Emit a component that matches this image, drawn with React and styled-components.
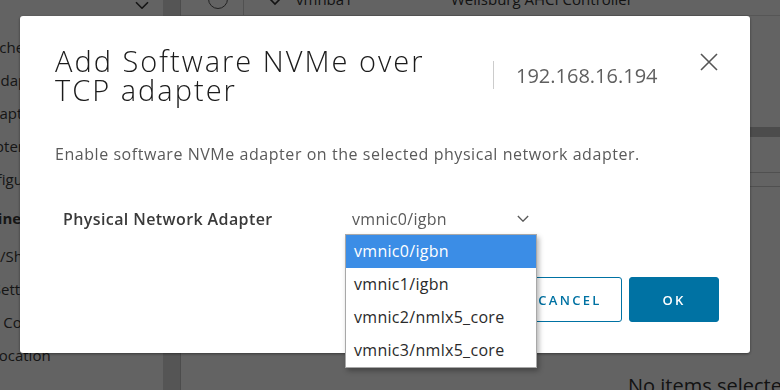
import React from 'react'
import styled, { createGlobalStyle } from 'styled-components'

const GlobalStyle = createGlobalStyle`
  html, body {
    margin: 0;
    padding: 0;
    width: 780px;
    height: 390px;
    overflow: hidden;
    background: #ffffff;
    font-family: "Open Sans", "Noto Sans", sans-serif;
  }
  * { box-sizing: border-box; }
`

const Page = styled.div`
  display: flex;
  width: 780px;
  height: 390px;
  overflow: hidden;
  background: #ffffff;
  color: #333;
`

const Sidebar = styled.aside`
  width: 163px;
  flex: 0 0 163px;
  overflow: hidden;
  display: flex;
  flex-direction: column;
`

const SideTop = styled.div`
  height: 22px;
  display: flex;
  justify-content: flex-end;
  align-items: center;
  padding-right: 14px;
  margin-top: -6px;
  color: #333;
`

const NavList = styled.ul`
  list-style: none;
  margin: 15px 0 0 -98px;
  padding: 0;
  white-space: nowrap;
`

const NavItem = styled.li`
  height: 33px;
  line-height: 33px;
  font-size: 15px;
  padding-left: ${p => (p.$head ? '0' : '20px')};
  font-weight: ${p => (p.$head ? 700 : 400)};
  margin-top: ${p => (p.$gap ? '6px' : '0')};
  margin-bottom: ${p => (p.$head ? '5px' : '0')};
  color: #3a3a3a;
`

const Splitter = styled.div`
  width: 18px;
  flex: 0 0 18px;
  background: #dcdcdc;
  border-right: 1px solid #c4c4c4;
`

const Main = styled.main`
  flex: 1;
  display: flex;
  flex-direction: column;
  min-width: 0;
`

const TableRow = styled.div`
  display: flex;
  align-items: center;
  height: 34px;
  margin-top: -18px;
  border-bottom: 1px solid #dedede;
  font-size: 15px;
  color: #333;
`

const Cell = styled.div`
  display: flex;
  align-items: center;
  gap: 10px;
  height: 100%;
  width: ${p => p.$w || 'auto'};
  padding-left: ${p => p.$pl || '12px'};
  border-right: ${p => (p.$line ? '1px solid #d0d0d0' : 'none')};
`

const Radio = styled.span`
  width: 20px;
  height: 20px;
  border-radius: 50%;
  border: 1.5px solid #555;
  background: #fff;
`

const Band = styled.div`
  margin-top: 111px;
  height: 10px;
  background: #c4c4c4;
`

const Rule = styled.div`
  margin-top: ${p => p.$mt};
  height: 1px;
  background: #cfcfcf;
`

const Empty = styled.div`
  margin-top: auto;
  margin-bottom: -9px;
  padding-left: 447px;
  font-size: 20px;
  color: #333;
  white-space: nowrap;
`

const Overlay = styled.div`
  position: fixed;
  inset: 0;
  background: rgba(0, 0, 0, 0.61);
  display: flex;
  align-items: flex-start;
  padding: 16px 0 0 20px;
`

const Modal = styled.section`
  width: 730px;
  height: 337px;
  background: #fff;
  border-radius: 3px;
  box-shadow: 0 1px 3px rgba(0, 0, 0, 0.45);
  padding: 30px 31px 31px 35px;
  display: flex;
  flex-direction: column;
`

const Header = styled.header`
  display: flex;
  align-items: center;
`

const Title = styled.h2`
  margin: 0;
  width: 415px;
  flex: 0 0 415px;
  font-size: 29px;
  line-height: 29px;
  font-weight: 300;
  color: #1b1b1b;
  letter-spacing: 2px;
`

const Divider = styled.span`
  width: 1px;
  height: 28px;
  background: #cccccc;
  margin: 0 22px 0 23px;
`

const Host = styled.span`
  font-size: 20px;
  color: #5f5f5f;
  font-weight: 400;
  flex: 1;
`

const Close = styled.button`
  align-self: flex-start;
  margin-top: 6px;
  border: 0;
  background: none;
  padding: 0;
  width: 20px;
  height: 20px;
  color: #555;
  display: flex;
`

const Desc = styled.p`
  margin: 40px 0 0;
  font-size: 16px;
  line-height: 20px;
  letter-spacing: 0.55px;
  color: #5a5a5a;
`

const FormRow = styled.div`
  margin-top: 39px;
  display: flex;
  align-items: center;
  height: 31px;
`

const Label = styled.label`
  width: 290px;
  padding-left: 8px;
  font-size: 16px;
  letter-spacing: 0.4px;
  font-weight: 600;
  color: #3a3a3a;
`

const SelectWrap = styled.div`
  position: relative;
  width: 192px;
  height: 31px;
`

const SelectBox = styled.div`
  height: 31px;
  display: flex;
  align-items: center;
  justify-content: space-between;
  padding: 0 8px 0 7px;
  font-size: 16px;
  letter-spacing: 0.3px;
  color: #5a5a5a;
`

const List = styled.ul`
  position: absolute;
  top: 100%;
  left: 0;
  width: 192px;
  margin: 0;
  padding: 0;
  list-style: none;
  background: #fff;
  border: 1px solid #a8a8a8;
  box-shadow: 2px 3px 5px rgba(0, 0, 0, 0.3);
  z-index: 2;
`

const Option = styled.li`
  height: 33px;
  line-height: 33px;
  padding-left: 8px;
  font-size: 16px;
  letter-spacing: 0.3px;
  background: ${p => (p.$active ? '#3b8de6' : '#fff')};
  color: ${p => (p.$active ? '#fff' : '#2a2a2a')};
`

const Footer = styled.footer`
  margin-top: auto;
  display: flex;
  justify-content: flex-end;
  gap: 7px;
`

const Button = styled.button`
  height: 45px;
  width: ${p => p.$w};
  border-radius: 3px;
  border: 1px solid #0072a3;
  background: ${p => (p.$primary ? '#0072a3' : '#fff')};
  color: ${p => (p.$primary ? '#fff' : '#0072a3')};
  font-family: "Open Sans", sans-serif;
  font-size: 13px;
  font-weight: 600;
  letter-spacing: 2.3px;
  text-transform: uppercase;
`

const Chevron = ({ size = 14 }) => (
  <svg width={size} height={size * 0.6} viewBox="0 0 14 8" fill="none">
    <path d="M1 1l6 6 6-6" stroke="currentColor" strokeWidth="1.6" />
  </svg>
)

const HbaIcon = () => (
  <svg width="22" height="16" viewBox="0 0 22 16" fill="none">
    <path d="M2 4l9 9 9-9M6 4h10" stroke="#333" strokeWidth="1.6" />
  </svg>
)

const nav = [
  { t: 'Virtual switches' },
  { t: 'VMkernel adapters' },
  { t: 'Physical adapters' },
  { t: 'RDMA adapters' },
  { t: 'TCP/IP configuration' },
  { t: 'Virtual Machines', head: true },
  { t: 'VM Startup/Shutdown' },
  { t: 'Agent VM Settings' },
  { t: 'Default VM Compatibility' },
  { t: 'Swap File Location' },
]

const options = ['vmnic0/igbn', 'vmnic1/igbn', 'vmnic2/nmlx5_core', 'vmnic3/nmlx5_core']

export default function App() {
  return (
    <>
      <GlobalStyle />
      <Page>
        <Sidebar>
          <SideTop>
            <Chevron />
          </SideTop>
          <NavList>
            {nav.map(n => (
              <NavItem key={n.t} $head={n.head} $gap={n.head}>
                {n.t}
              </NavItem>
            ))}
          </NavList>
        </Sidebar>
        <Splitter />
        <Main>
          <TableRow>
            <Cell $w="63px" $pl="27px" $line>
              <Radio />
            </Cell>
            <Cell $w="195px" $pl="20px">
              <HbaIcon />
              vmnba1
            </Cell>
            <Cell>Wellsburg AHCI Controller</Cell>
          </TableRow>
          <Band />
          <Rule $mt="35px" />
          <Rule $mt="13px" />
          <Empty>No items selected</Empty>
        </Main>
      </Page>
      <Overlay>
        <Modal>
          <Header>
            <Title>Add Software NVMe over TCP adapter</Title>
            <Divider />
            <Host>192.168.16.194</Host>
            <Close aria-label="Close">
              <svg width="20" height="20" viewBox="0 0 20 20" fill="none">
                <path d="M2 2l16 16M18 2L2 18" stroke="currentColor" strokeWidth="1.6" />
              </svg>
            </Close>
          </Header>
          <Desc>Enable software NVMe adapter on the selected physical network adapter.</Desc>
          <FormRow>
            <Label>Physical Network Adapter</Label>
            <SelectWrap>
              <SelectBox>
                vmnic0/igbn
                <Chevron size={12} />
              </SelectBox>
              <List>
                {options.map((o, i) => (
                  <Option key={o} $active={i === 0}>
                    {o}
                  </Option>
                ))}
              </List>
            </SelectWrap>
          </FormRow>
          <Footer>
            <Button $w="104px">Cancel</Button>
            <Button $w="90px" $primary>
              OK
            </Button>
          </Footer>
        </Modal>
      </Overlay>
    </>
  )
}
